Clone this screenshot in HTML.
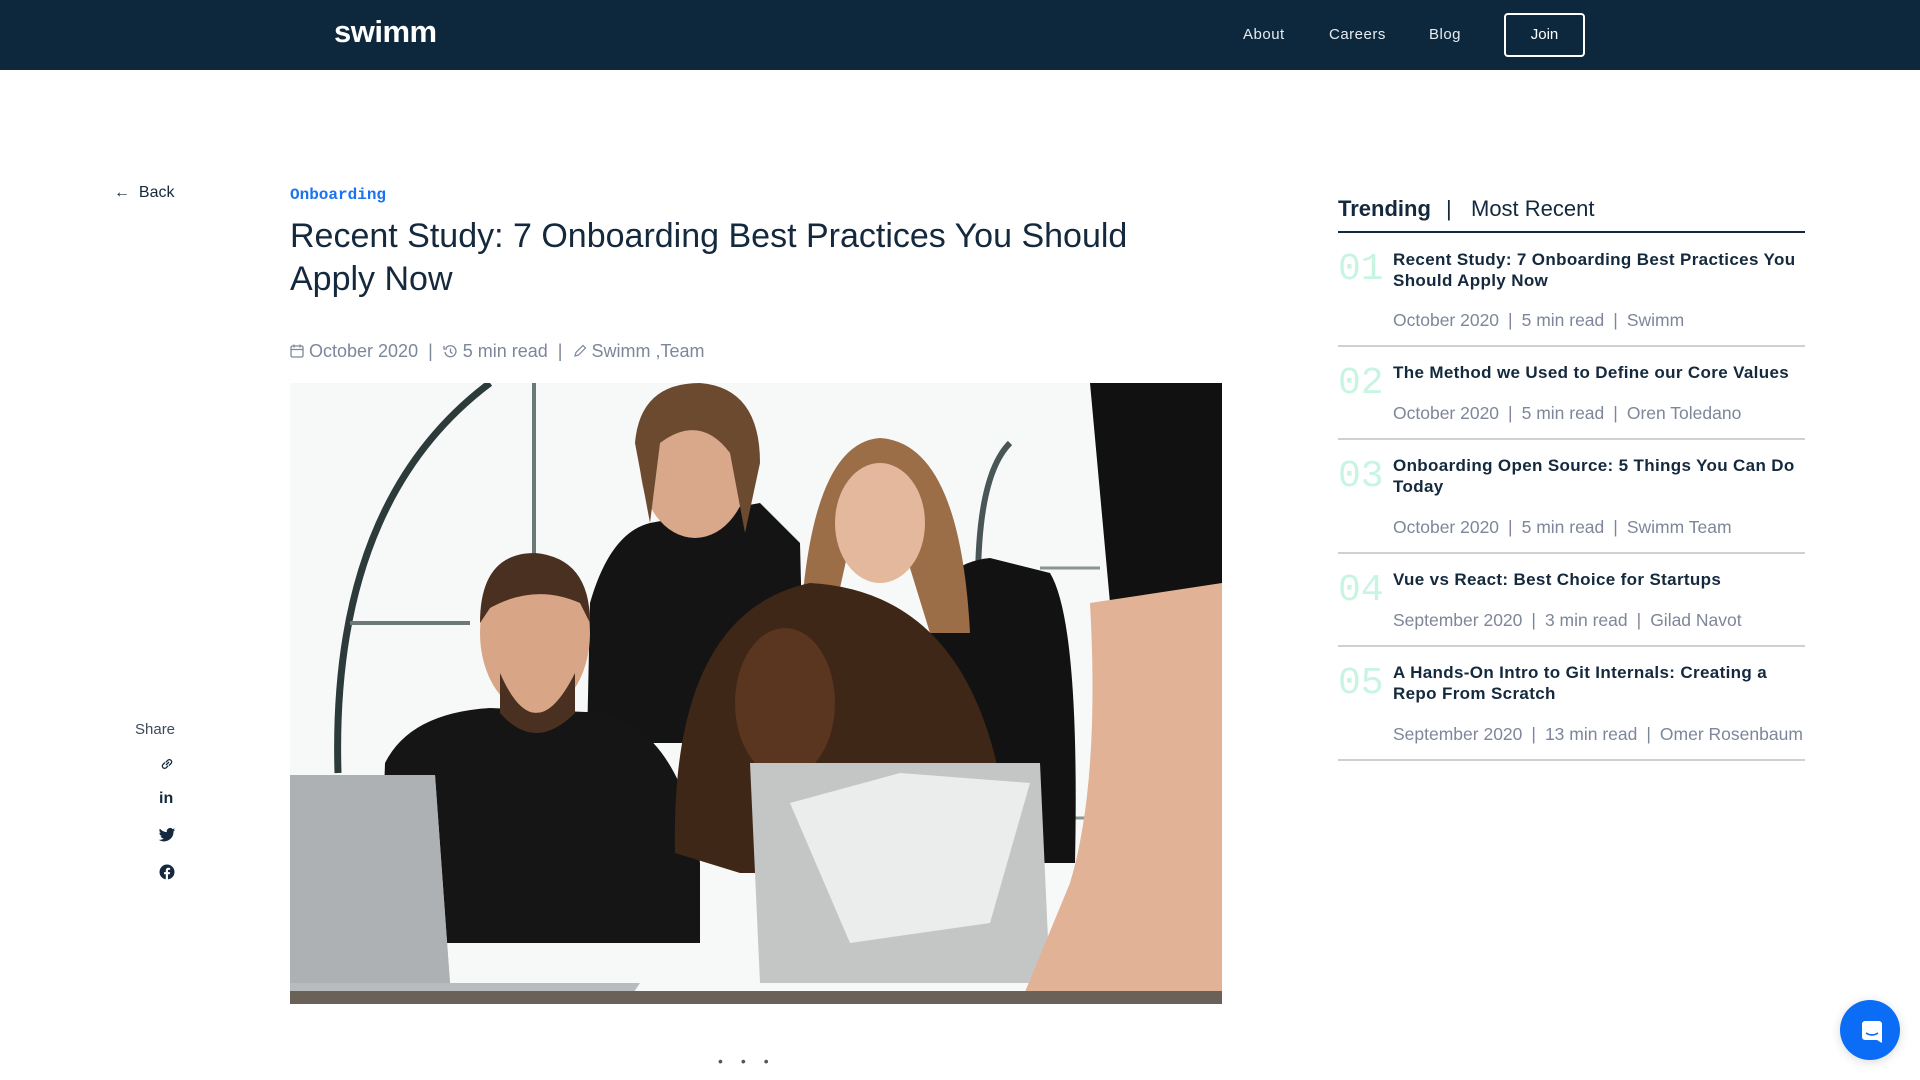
<!DOCTYPE html>
<html><head><meta charset="utf-8"><style>
*{margin:0;padding:0;box-sizing:border-box}
body{width:1920px;height:1080px;overflow:hidden;background:#fff;font-family:"Liberation Sans",sans-serif;color:#14293d;position:relative}
.a{position:absolute;white-space:nowrap}
nav{position:absolute;left:0;top:0;width:1920px;height:70px;background:#0d283d}
.nl{color:#e6ebf0;font-size:15px;letter-spacing:.5px;top:26px}
.num{font-family:"Liberation Mono",monospace;color:#c8f5e2;font-size:38px;left:1338px}
.t{left:1393px;font-size:17px;font-weight:bold;letter-spacing:.35px;line-height:21px;color:#14293d}
.m{left:1393px;font-size:17.5px;color:#7d8799}
.m span{margin:0 9px}
.hr{position:absolute;left:1338px;width:467px;height:2px;background:#cdd0d4}
.sh{position:absolute;left:158px;width:18px;height:18px}
</style></head><body>
<nav>
<div class="a" style="left:334px;top:14px;color:#fff;font-size:31px;font-weight:bold;letter-spacing:-0.5px">swimm</div>
<div class="a nl" style="left:1243px">About</div>
<div class="a nl" style="left:1329px">Careers</div>
<div class="a nl" style="left:1429px">Blog</div>
<div class="a" style="left:1504px;top:13px;width:81px;height:44px;border:2px solid #fff;border-radius:4px;color:#fff;font-size:15px;text-align:center;line-height:40px">Join</div>
</nav>

<div class="a" style="left:114px;top:184px;font-size:16px;color:#14293d">&#8592;&nbsp;&nbsp;Back</div>
<div class="a" style="left:290px;top:186px;font-family:'Liberation Mono',monospace;font-weight:bold;color:#1a73f0;font-size:16px">Onboarding</div>
<div class="a" style="left:290px;top:215px;font-size:34px;line-height:43px;color:#14293d;white-space:normal;width:880px">Recent Study: 7 Onboarding Best Practices You Should Apply Now</div>
<div class="a" style="left:290px;top:341px;font-size:18px;color:#7d8799">
<svg width="14" height="14" viewBox="0 0 14 14" style="vertical-align:-1px"><rect x="1" y="2" width="12" height="11" rx="1.5" fill="none" stroke="#7d8799" stroke-width="1.3"/><path d="M1 5.5h12M4 0.5v3M10 0.5v3" stroke="#7d8799" stroke-width="1.3"/></svg>
 October 2020 &nbsp;| &nbsp;<svg width="15" height="15" viewBox="0 0 15 15" style="vertical-align:-2px"><path d="M3 4A5.5 5.5 0 1 1 2 8" fill="none" stroke="#7d8799" stroke-width="1.3"/><path d="M1 2v3h3M7.5 4.5v3.5l2 1.5" fill="none" stroke="#7d8799" stroke-width="1.3"/></svg> 5 min read &nbsp;| &nbsp;<svg width="14" height="14" viewBox="0 0 14 14" style="vertical-align:-1px"><path d="M2 12l1-3.5 7-7 2.5 2.5-7 7z" fill="none" stroke="#7d8799" stroke-width="1.2"/></svg> Swimm ,Team</div>

<svg class="a" style="left:290px;top:383px" width="932" height="621" viewBox="0 0 932 621">
<rect width="932" height="621" fill="#f7f8f8"/>
<path d="M48 390 Q40 120 200 0" fill="none" stroke="#2d3a3a" stroke-width="7"/>
<path d="M244 0V250M60 240H180" stroke="#6d7878" stroke-width="4"/>
<path d="M690 260 Q680 100 720 60" fill="none" stroke="#4a5555" stroke-width="6"/>
<path d="M750 185H810M780 435H820" stroke="#8a9494" stroke-width="3"/>
<path d="M297 360 L300 220 Q320 150 360 140 L470 120 L510 160 L515 360Z" fill="#141414"/>
<ellipse cx="405" cy="80" rx="55" ry="75" fill="#d9a88a"/>
<path d="M345 60 Q350 0 410 0 Q470 5 470 80 L455 150 L440 70 Q410 30 370 60 L360 140Z" fill="#6b4a30"/>
<path d="M640 480 L640 230 Q650 180 700 175 L760 190 Q790 240 785 480Z" fill="#121212"/>
<path d="M510 250 Q520 60 590 55 Q670 60 680 250 L640 250 L600 120 L560 160 L540 250Z" fill="#9b6e48"/>
<ellipse cx="590" cy="140" rx="45" ry="60" fill="#e3b89c"/>
<path d="M89 560 L95 380 Q120 330 200 325 L320 330 Q395 360 410 480 L410 560Z" fill="#151515"/>
<ellipse cx="245" cy="250" rx="55" ry="80" fill="#d8a586"/>
<path d="M190 240 Q190 170 245 170 Q300 175 300 240 L290 220 Q245 200 200 225Z" fill="#4a3020"/>
<path d="M210 290 Q245 370 285 290 L285 330 Q245 370 210 330Z" fill="#4a3020"/>
<path d="M385 470 Q380 230 520 200 Q700 210 720 470 L690 490 L450 490Z" fill="#3e2716"/>
<ellipse cx="495" cy="320" rx="50" ry="75" fill="#5a3520"/>
<path d="M460 380 L750 380 L760 600 L470 600Z" fill="#c4c6c6"/>
<path d="M500 420 L610 390 L740 400 L700 540 L560 560Z" fill="#ebecec"/>
<path d="M800 0 H932 V230 L820 220 Z" fill="#111"/>
<path d="M800 220 L932 200 L932 621 L730 621 L780 500 Q810 400 800 220Z" fill="#e2b296"/>
<path d="M0 392 L145 392 L160 600 L350 600 L340 615 L0 615Z" fill="#b9bcbf"/>
<path d="M0 392 H145 L160 600 H0Z" fill="#aeb1b4"/>
<rect x="0" y="608" width="932" height="13" fill="#6a6258"/>
</svg>

<div class="a" style="left:718px;top:1053px;font-size:14px;color:#555;letter-spacing:18px">•••</div>

<div class="a" style="left:135px;top:721px;font-size:15px;color:#3c4a5a">Share</div>
<svg class="sh" style="top:755px" viewBox="0 0 18 18"><path d="M8 10l3-3M7 7.5L5 9.5a2.2 2.2 0 0 0 3.2 3.2l2-2M11 10.5l2-2A2.2 2.2 0 0 0 9.8 5.3l-2 2" fill="none" stroke="#14293d" stroke-width="1.3"/></svg>
<div class="a" style="left:159px;top:790px;font-size:16px;font-weight:bold;color:#14293d">in</div>
<svg class="sh" style="top:826px" viewBox="0 0 24 24"><path fill="#14293d" d="M23 5a9 9 0 0 1-2.6.7A4.5 4.5 0 0 0 22.4 3a9 9 0 0 1-2.9 1.1A4.5 4.5 0 0 0 11.8 8.2 12.8 12.8 0 0 1 2.5 3.5a4.5 4.5 0 0 0 1.4 6 4.5 4.5 0 0 1-2-.6 4.5 4.5 0 0 0 3.6 4.5 4.5 4.5 0 0 1-2 .1 4.5 4.5 0 0 0 4.2 3.1A9 9 0 0 1 1 18.5a12.8 12.8 0 0 0 19.7-11.3A9 9 0 0 0 23 5z"/></svg>
<svg class="sh" style="top:863px" viewBox="0 0 24 24"><circle cx="12" cy="12" r="10" fill="#14293d"/><path d="M13.3 22v-7h2.4l.4-2.8h-2.8v-1.8c0-.8.3-1.4 1.4-1.4h1.5V6.5a19 19 0 0 0-2.2-.1c-2.2 0-3.6 1.3-3.6 3.7v2.1H8v2.8h2.4v7z" fill="#fff"/></svg>

<div class="a" style="left:1338px;top:196px;font-size:22px;font-weight:bold;color:#14293d">Trending</div>
<div class="a" style="left:1446px;top:196px;font-size:22px;color:#14293d">|</div>
<div class="a" style="left:1471px;top:196px;font-size:22px;color:#14293d">Most Recent</div>
<div class="hr" style="top:231px;background:#14293d"></div>

<div class="a num" style="top:248px">01</div>
<div class="a t" style="top:249px">Recent Study: 7 Onboarding Best Practices You<br>Should Apply Now</div>
<div class="a m" style="top:310px">October 2020<span>|</span>5 min read<span>|</span>Swimm</div>
<div class="hr" style="top:345px"></div>

<div class="a num" style="top:362px">02</div>
<div class="a t" style="top:362px">The Method we Used to Define our Core Values</div>
<div class="a m" style="top:403px">October 2020<span>|</span>5 min read<span>|</span>Oren Toledano</div>
<div class="hr" style="top:438px"></div>

<div class="a num" style="top:455px">03</div>
<div class="a t" style="top:455px">Onboarding Open Source: 5 Things You Can Do<br>Today</div>
<div class="a m" style="top:517px">October 2020<span>|</span>5 min read<span>|</span>Swimm Team</div>
<div class="hr" style="top:552px"></div>

<div class="a num" style="top:569px">04</div>
<div class="a t" style="top:569px">Vue vs React: Best Choice for Startups</div>
<div class="a m" style="top:610px">September 2020<span>|</span>3 min read<span>|</span>Gilad Navot</div>
<div class="hr" style="top:645px"></div>

<div class="a num" style="top:662px">05</div>
<div class="a t" style="top:662px">A Hands-On Intro to Git Internals: Creating a<br>Repo From Scratch</div>
<div class="a m" style="top:724px">September 2020<span>|</span>13 min read<span>|</span>Omer Rosenbaum</div>
<div class="hr" style="top:759px"></div>

<div class="a" style="left:1840px;top:1000px;width:60px;height:60px;border-radius:50%;background:#0b6df6;box-shadow:0 2px 10px rgba(0,0,0,.15)">
<svg width="60" height="60" viewBox="0 0 60 60"><path d="M22 24a3 3 0 0 1 3-3h14a3 3 0 0 1 3 3v19l-5-3H25a3 3 0 0 1-3-3z" fill="#fff"/><path d="M26 33q6 4 12 0" stroke="#0b6df6" stroke-width="1.6" fill="none"/></svg>
</div>
</body></html>
